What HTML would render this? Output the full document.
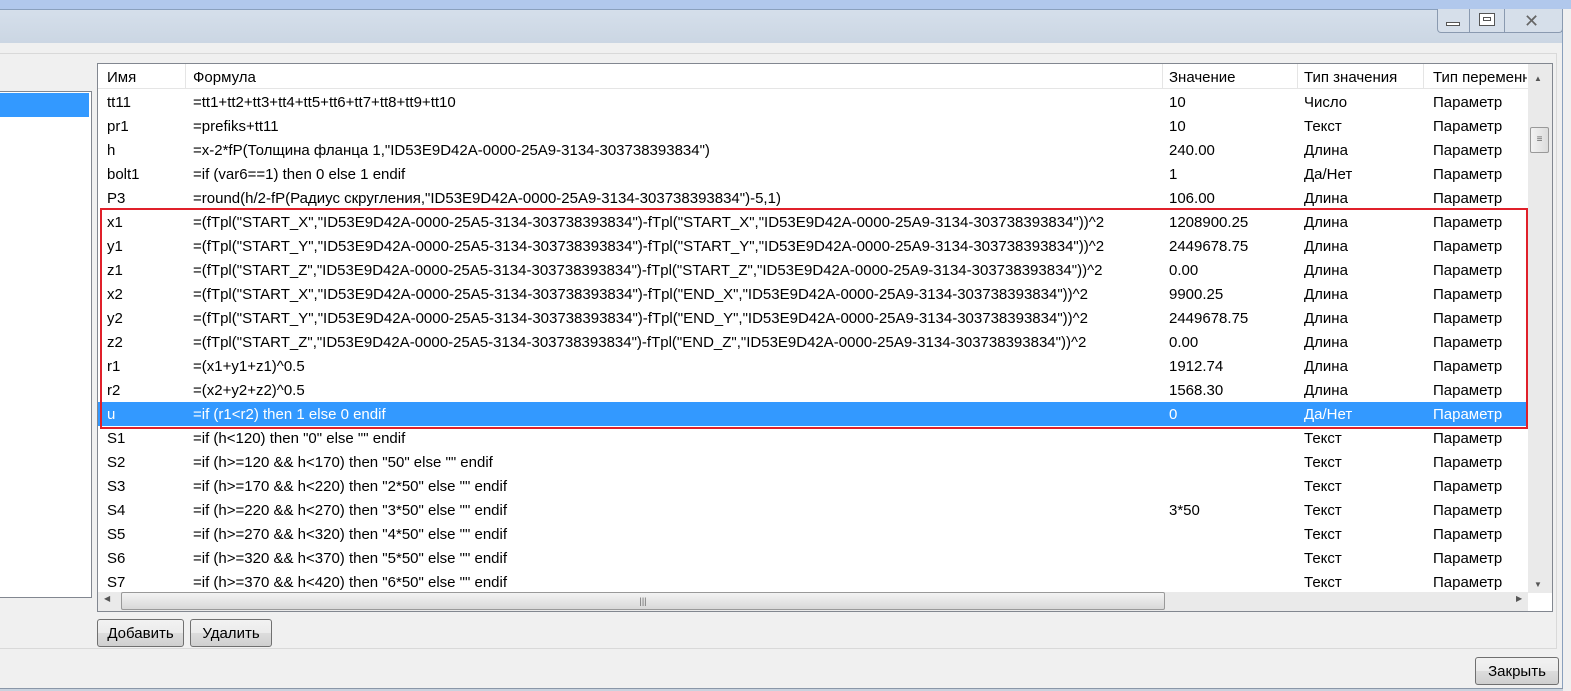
<!DOCTYPE html>
<html><head><meta charset="utf-8"><style>
*{margin:0;padding:0;box-sizing:border-box}
body{width:1571px;height:691px;overflow:hidden;background:#f0f0f0;font-family:"Liberation Sans",sans-serif;font-size:15px;color:#000;position:relative}
.a{position:absolute}
.t{position:absolute;white-space:nowrap;line-height:24px}
.btn{position:absolute;border:1px solid #707070;border-radius:3px;background:linear-gradient(#f2f2f2,#ebebeb 50%,#dddddd 50%,#cfcfcf);text-align:center;line-height:27px;font-size:15px}
</style></head><body>
<div class="a" style="left:0;top:0;width:1571px;height:9px;background:#b1c8ec"></div>
<div class="a" style="left:0;top:9px;width:1563px;height:34px;background:linear-gradient(#d5dfeb,#cbd6e3);border-top:1px solid #8aa0bd;border-right:1px solid #8aa0bd;border-radius:0 6px 0 0"></div>
<div class="a" style="left:1437px;top:9px;width:126px;height:24px;border:1px solid #8a9ab0;border-top:none;border-radius:0 0 4px 4px;background:#d6dfea"></div>
<div class="a" style="left:1469px;top:9px;width:1px;height:24px;background:#8a9ab0"></div>
<div class="a" style="left:1504px;top:9px;width:1px;height:24px;background:#8a9ab0"></div>
<div class="a" style="left:1446px;top:22px;width:14px;height:4px;border:1px solid #555;background:#fff"></div>
<div class="a" style="left:1479px;top:13px;width:16px;height:13px;border:1px solid #555;background:#fff"><div style="margin:3px;height:4px;border:1px solid #555"></div></div>
<div class="a" style="left:1524px;top:9px;font-size:18px;color:#666;line-height:24px">✕</div>
<div class="a" style="left:0;top:43px;width:1563px;height:648px;background:#f0f0f0;border-right:1px solid #8aa0bd"></div>
<div class="a" style="left:0;top:53px;width:1557px;height:596px;border-top:1px solid #d9d9d9;border-bottom:1px solid #d9d9d9;border-right:1px solid #d9d9d9"></div>
<div class="a" style="left:0;top:688px;width:1563px;height:3px;background:#c9d3df;border-top:1px solid #8a97a8"></div>
<div class="a" style="left:0;top:91px;width:92px;height:507px;background:#fff;border:1px solid #828790;border-left:none"></div>
<div class="a" style="left:0;top:93px;width:89px;height:24px;background:#3399ff"></div>
<div class="a" style="left:97px;top:63px;width:1456px;height:549px;background:#fff;border:1px solid #828790"></div>
<div class="a" style="left:98px;top:64px;width:1430px;height:25px;background:#fff;border-bottom:1px solid #e5e5e5"></div>
<div class="a" style="left:185px;top:64px;width:1px;height:25px;background:#e5e5e5"></div>
<div class="a" style="left:1162px;top:64px;width:1px;height:25px;background:#e5e5e5"></div>
<div class="a" style="left:1297px;top:64px;width:1px;height:25px;background:#e5e5e5"></div>
<div class="a" style="left:1423px;top:64px;width:1px;height:25px;background:#e5e5e5"></div>
<div class="t" style="left:107px;top:66px">Имя</div>
<div class="t" style="left:193px;top:66px">Формула</div>
<div class="t" style="left:1169px;top:66px">Значение</div>
<div class="t" style="left:1304px;top:66px">Тип значения</div>
<div class="t" style="left:1433px;top:66px;width:94px;overflow:hidden">Тип переменн</div>
<div class="a" style="left:98px;top:402px;width:1430px;height:24px;background:#3399ff"></div>
<div id="rows"></div>
<div class="a" style="left:100px;top:208px;width:1428px;height:221px;border:2px solid #e0202a"></div>
<div class="a" style="left:1528px;top:64px;width:24px;height:529px;background:#eaeaea"></div>
<div class="a" style="left:1534px;top:74px;color:#555;font-size:8px">▲</div>
<div class="a" style="left:1534px;top:580px;color:#555;font-size:8px">▼</div>
<div class="a" style="left:1530px;top:127px;width:19px;height:26px;border:1px solid #999;border-radius:2px;background:linear-gradient(90deg,#f3f3f3,#dcdcdc);font-size:10px;text-align:center;line-height:24px;color:#666">≡</div>
<div class="a" style="left:98px;top:592px;width:1430px;height:19px;background:#eaeaea"></div>
<div class="a" style="left:104px;top:594px;color:#555;font-size:8px">◀</div>
<div class="a" style="left:1516px;top:594px;color:#555;font-size:8px">▶</div>
<div class="a" style="left:121px;top:592px;width:1044px;height:18px;border:1px solid #999;border-radius:2px;background:linear-gradient(#f3f3f3,#d8d8d8);font-size:9px;text-align:center;line-height:16px;color:#666">|||</div>
<div class="btn" style="left:97px;top:619px;width:87px;height:28px">Добавить</div>
<div class="btn" style="left:190px;top:619px;width:82px;height:28px">Удалить</div>
<div class="btn" style="left:1475px;top:657px;width:84px;height:28px">Закрыть</div>
<script>
var R=[["tt11","=tt1+tt2+tt3+tt4+tt5+tt6+tt7+tt8+tt9+tt10","10","Число"],
["pr1","=prefiks+tt11","10","Текст"],
["h","=x-2*fP(Толщина фланца 1,\"ID53E9D42A-0000-25A9-3134-303738393834\")","240.00","Длина"],
["bolt1","=if (var6==1) then 0 else 1 endif","1","Да/Нет"],
["P3","=round(h/2-fP(Радиус скругления,\"ID53E9D42A-0000-25A9-3134-303738393834\")-5,1)","106.00","Длина"],
["x1","=(fTpl(\"START_X\",\"ID53E9D42A-0000-25A5-3134-303738393834\")-fTpl(\"START_X\",\"ID53E9D42A-0000-25A9-3134-303738393834\"))^2","1208900.25","Длина"],
["y1","=(fTpl(\"START_Y\",\"ID53E9D42A-0000-25A5-3134-303738393834\")-fTpl(\"START_Y\",\"ID53E9D42A-0000-25A9-3134-303738393834\"))^2","2449678.75","Длина"],
["z1","=(fTpl(\"START_Z\",\"ID53E9D42A-0000-25A5-3134-303738393834\")-fTpl(\"START_Z\",\"ID53E9D42A-0000-25A9-3134-303738393834\"))^2","0.00","Длина"],
["x2","=(fTpl(\"START_X\",\"ID53E9D42A-0000-25A5-3134-303738393834\")-fTpl(\"END_X\",\"ID53E9D42A-0000-25A9-3134-303738393834\"))^2","9900.25","Длина"],
["y2","=(fTpl(\"START_Y\",\"ID53E9D42A-0000-25A5-3134-303738393834\")-fTpl(\"END_Y\",\"ID53E9D42A-0000-25A9-3134-303738393834\"))^2","2449678.75","Длина"],
["z2","=(fTpl(\"START_Z\",\"ID53E9D42A-0000-25A5-3134-303738393834\")-fTpl(\"END_Z\",\"ID53E9D42A-0000-25A9-3134-303738393834\"))^2","0.00","Длина"],
["r1","=(x1+y1+z1)^0.5","1912.74","Длина"],
["r2","=(x2+y2+z2)^0.5","1568.30","Длина"],
["u","=if (r1<r2) then 1 else 0 endif","0","Да/Нет"],
["S1","=if (h<120) then \"0\" else \"\" endif","","Текст"],
["S2","=if (h>=120 && h<170) then \"50\" else \"\" endif","","Текст"],
["S3","=if (h>=170 && h<220) then \"2*50\" else \"\" endif","","Текст"],
["S4","=if (h>=220 && h<270) then \"3*50\" else \"\" endif","3*50","Текст"],
["S5","=if (h>=270 && h<320) then \"4*50\" else \"\" endif","","Текст"],
["S6","=if (h>=320 && h<370) then \"5*50\" else \"\" endif","","Текст"],
["S7","=if (h>=370 && h<420) then \"6*50\" else \"\" endif","","Текст"]];
var h="";
function e(s){return s.replace(/&/g,"&amp;").replace(/</g,"&lt;").replace(/>/g,"&gt;")}
R.forEach(function(r,i){var y=91+24*i;var c=i==13?"color:#fff;":"";
h+='<div class="t" style="'+c+'left:107px;top:'+y+'px">'+e(r[0])+'</div><div class="t" style="'+c+'left:193px;top:'+y+'px">'+e(r[1])+'</div><div class="t" style="'+c+'left:1169px;top:'+y+'px">'+e(r[2])+'</div><div class="t" style="'+c+'left:1304px;top:'+y+'px">'+e(r[3])+'</div><div class="t" style="'+c+'left:1433px;top:'+y+'px">Параметр</div>';});
document.getElementById("rows").outerHTML='<div class="a" style="left:0;top:0;width:1528px;height:592px;overflow:hidden">'+h+'</div>';
</script>
</body></html>
